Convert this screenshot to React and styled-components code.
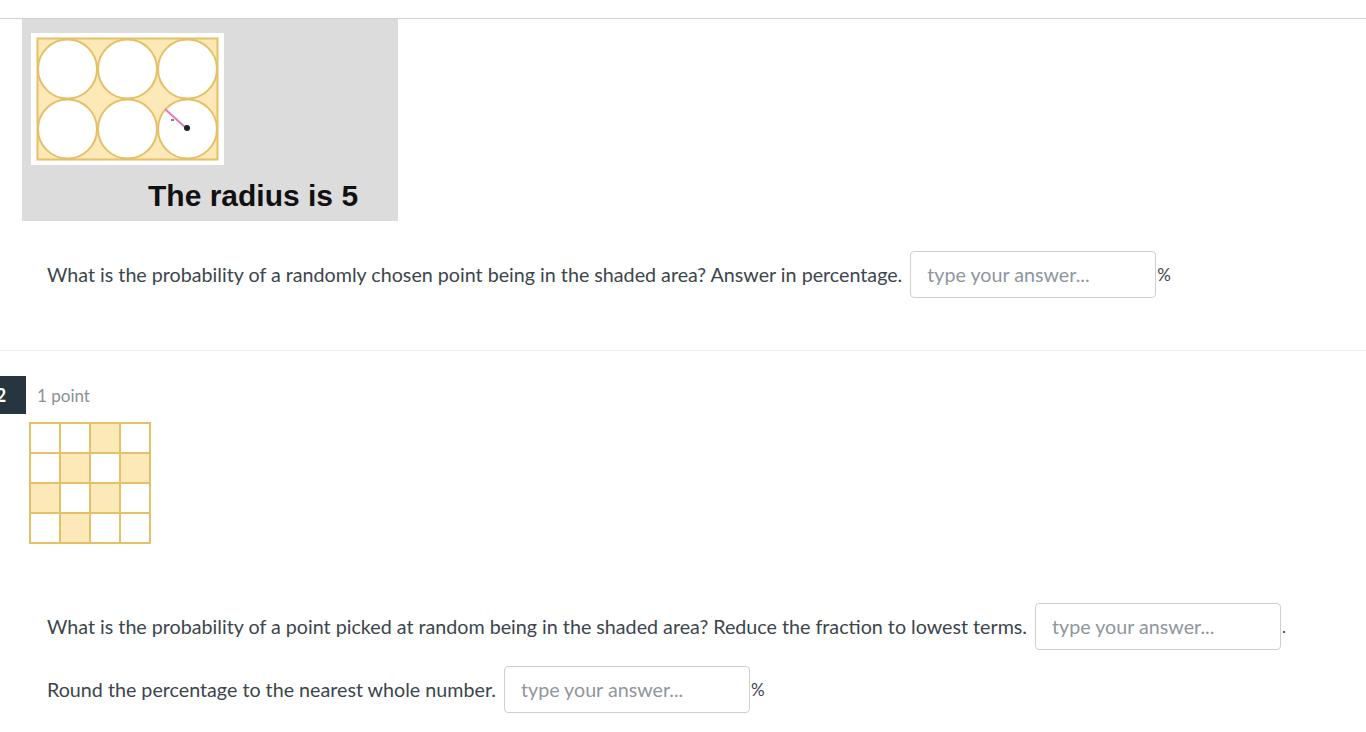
import React from 'react'
import styled, { createGlobalStyle } from 'styled-components'

const GlobalStyle = createGlobalStyle`
  body {
    margin: 0;
    background: #fff;
    font-family: Lato, "Open Sans", sans-serif;
    color: #3c454c;
    overflow: hidden;
  }
`

const Page = styled.div`
  padding-top: 18px;
`

const Question = styled.section`
  border-top: 1px solid ${props => (props.first ? '#d0d0d0' : '#efefef')};
  padding-bottom: ${props => props.bottom || 0}px;
`

const Figure = styled.div`
  margin-left: 22px;
  width: 376px;
  height: 202px;
  background: #dcdcdc;
  box-sizing: border-box;
  padding: 14px 0 0 9px;
`

const Picture = styled.div`
  width: 193px;
  height: 132px;
  background: #fff;
  display: flex;
  align-items: center;
  justify-content: center;
`

const Caption = styled.div`
  font-family: "Liberation Sans", Arial, sans-serif;
  font-weight: bold;
  font-size: 30px;
  color: #111;
  padding-left: 117px;
  margin-top: 14px;
`

const Row = styled.div`
  display: flex;
  align-items: center;
  padding-left: 47px;
  margin-top: ${props => props.top || 0}px;
  font-size: 19.7px;
  white-space: nowrap;
`

const Answer = styled.input`
  width: 246px;
  height: 47px;
  box-sizing: border-box;
  margin-left: 8px;
  margin-right: 1px;
  border: 1px solid #cfcfcf;
  border-radius: 4px;
  padding: 0 16px;
  font-family: Lato, sans-serif;
  font-size: 19.7px;
  color: #3c454c;
  &::placeholder {
    color: #8f969c;
  }
`

const Unit = styled.span`
  font-size: 17px;
`

const Header = styled.div`
  display: flex;
  align-items: center;
  margin-top: 25px;
  gap: 11px;
`

const Badge = styled.div`
  width: 50px;
  height: 38px;
  margin-left: -24px;
  background: #263540;
  color: #fff;
  font-weight: bold;
  font-size: 18px;
  display: flex;
  align-items: center;
  justify-content: center;
`

const Points = styled.span`
  color: #8a9196;
  font-size: 17px;
`

const GridPic = styled.svg`
  display: block;
  margin: 8px 0 0 29px;
`

const gold = '#e6c067'
const fill = '#fde8b8'

const Circles = () => (
  <svg width="183" height="124" viewBox="0 0 183 124">
    <rect x="1.5" y="1.5" width="180" height="121" fill={fill} stroke={gold} strokeWidth="2" />
    {[0, 1].map(r =>
      [0, 1, 2].map(c => (
        <circle
          key={r + '-' + c}
          cx={31.5 + c * 60}
          cy={32 + r * 60}
          r="29.5"
          fill="#fff"
          stroke={gold}
          strokeWidth="2"
        />
      ))
    )}
    <line x1="129" y1="72" x2="150" y2="91" stroke="#e07ab9" strokeWidth="2" />
    <line x1="135" y1="83" x2="138" y2="83" stroke="#333" strokeWidth="1.2" />
    <circle cx="151" cy="91" r="3" fill="#222" />
  </svg>
)

const shaded = [
  [0, 0, 1, 0],
  [0, 1, 0, 1],
  [1, 0, 1, 0],
  [0, 1, 0, 0],
]

const Grid = () => (
  <GridPic width="122" height="122" viewBox="0 0 122 122">
    {shaded.map((row, r) =>
      row.map((s, c) => (
        <rect
          key={r + '-' + c}
          x={1 + c * 30}
          y={1 + r * 30}
          width="30"
          height="30"
          fill={s ? fill : '#fff'}
          stroke={gold}
          strokeWidth="2"
        />
      ))
    )}
  </GridPic>
)

export default function App() {
  return (
    <Page>
      <GlobalStyle />
      <Question first bottom={52}>
        <Figure>
          <Picture>
            <Circles />
          </Picture>
          <Caption>The radius is 5</Caption>
        </Figure>
        <Row top={30}>
          What is the probability of a randomly chosen point being in the shaded area? Answer in percentage.
          <Answer placeholder="type your answer..." />
          <Unit>%</Unit>
        </Row>
      </Question>
      <Question>
        <Header>
          <Badge>2</Badge>
          <Points>1 point</Points>
        </Header>
        <Grid />
        <Row top={59}>
          What is the probability of a point picked at random being in the shaded area? Reduce the fraction to lowest terms.
          <Answer placeholder="type your answer..." />
          <Unit>.</Unit>
        </Row>
        <Row top={16}>
          Round the percentage to the nearest whole number.
          <Answer placeholder="type your answer..." />
          <Unit>%</Unit>
        </Row>
      </Question>
    </Page>
  )
}
